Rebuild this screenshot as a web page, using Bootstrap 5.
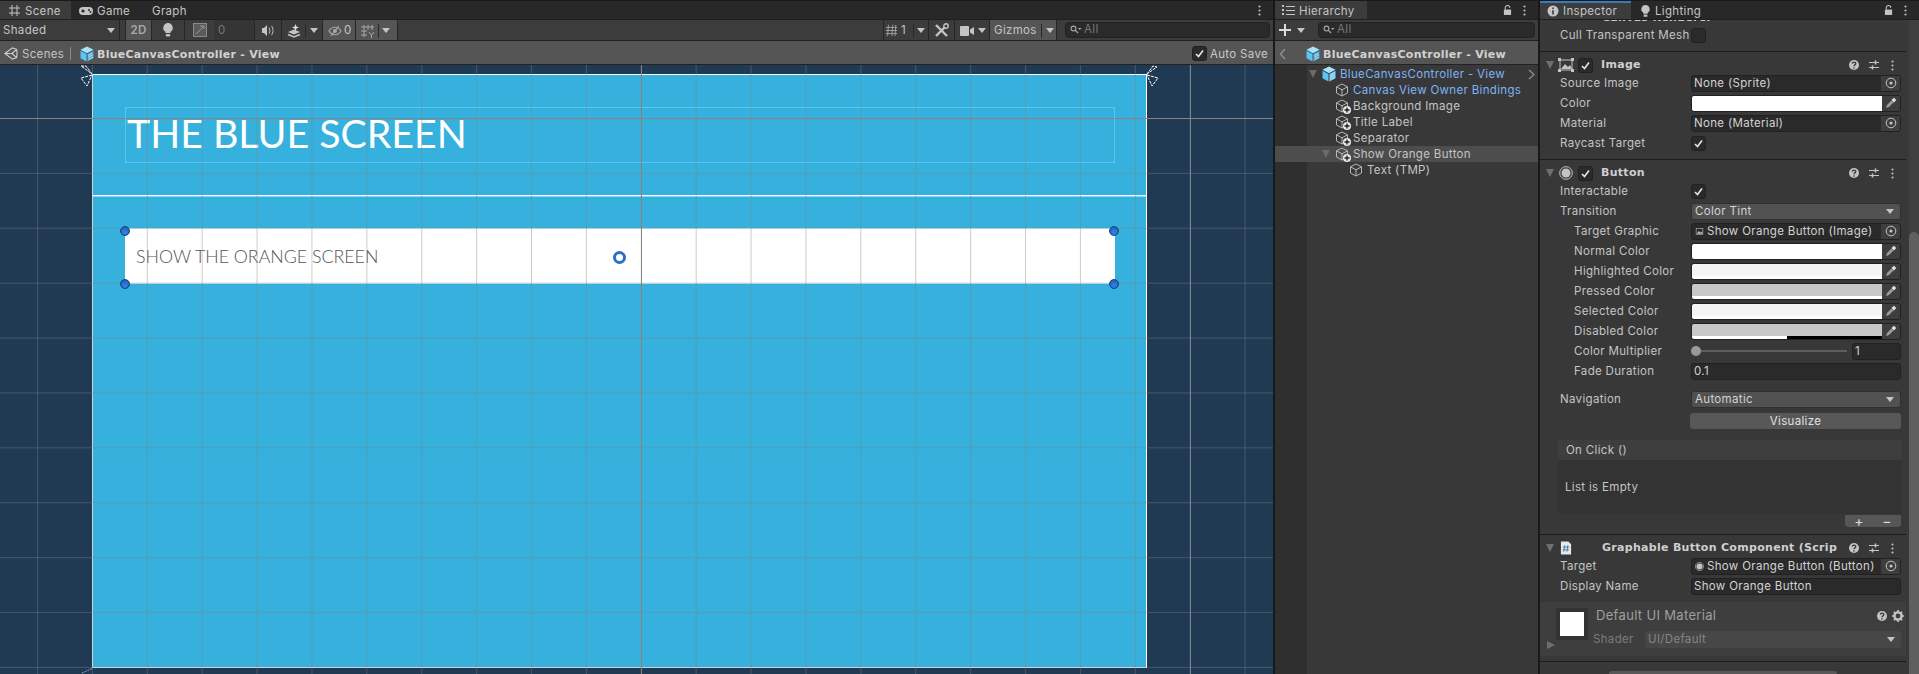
<!DOCTYPE html>
<html lang="en">
<head>
<meta charset="UTF-8">
<meta name="viewport" content="width=device-width, initial-scale=1">
<title>Unity Editor</title>
<link href="https://cdn.jsdelivr.net/npm/bootstrap@5.3.0/dist/css/bootstrap.min.css" rel="stylesheet">
<style>
body { margin:0; width:1919px; height:674px; overflow:hidden; background:#191919; font-family:Inter,"Liberation Sans",sans-serif; font-size:11.5px; letter-spacing:.33px; color:#c4c4c4; line-height:1.2; }
svg { display:block; flex:none; }
.ed-root { height:674px; }
.tabbar { height:20px; background:#282828; border-top:1px solid #1b1b1b; border-bottom:1px solid #1f1f1f; }
.tb-tab { height:18px; display:flex; align-items:center; gap:4px; color:#c4c4c4; padding-top:3px; white-space:nowrap; }
.tb-tab.on { background:#3c3c3c; }
.tb-tab svg { margin-top:-2px; }
.scene-panel { width:1273px; }
.tab-scene { width:71px; padding-left:8px; }
.tab-game { width:81px; padding-left:8px; }
.tab-end { margin-right:12px; margin-left:11px; }
.toolbar { height:21px; background:#3c3c3c; border-bottom:1px solid #1f1f1f; }
.tool { height:20px; display:flex; align-items:center; border-right:1px solid #262626; flex:none; padding:1px 0 0 5px; gap:4px; }
.tool.lit { background:#555; }
.caret { width:0; height:0; border-left:4px solid transparent; border-right:4px solid transparent; border-top:5px solid #c4c4c4; flex:none; }
.tsep { width:1px; height:14px; background:#2a2a2a; flex:none; }
.t-shaded { width:120px; padding-left:3px; justify-content:space-between; padding-right:4px; }
.t-gap { width:6px; padding:0; }
.t-2d { width:26px; padding:1px 0 0; justify-content:center; font-weight:600; color:#a8a8a8; }
.t-bulb { width:33px; justify-content:center; padding:0; }
.t-frame { width:29px; justify-content:center; padding:0; border-right:0; }
.t-num { width:41px; background:#353535; color:#777; border-radius:2px; padding-left:4px; }
.t-audio { width:27px; justify-content:center; padding:0; }
.t-fx { width:41px; padding-left:5px; }
.t-hidden { width:33px; gap:2px; }
.t-grid { width:42px; gap:3px; }
.t-space { flex:1; }
.t-snap { width:46px; background:#3c3c3c; border-left:1px solid #262626; padding-left:1px; gap:3px; }
.t-snap .caret { margin-right:3px; }
.t-tools { width:26px; justify-content:center; padding:0; }
.t-cam { width:35px; }
.t-gizmo { width:67px; padding-left:4px; }
.t-search { width:205px; height:16px; margin:0 3px 0 8px; background:#2a2a2a; border:1px solid #212121; border-radius:4px; display:flex; align-items:center; gap:2px; padding-left:4px; color:#777; flex:none; }
.crumb { height:24px; background:#555; border-bottom:1px solid #222; display:flex; align-items:center; flex:none; padding-top:5px; }
.crumb svg { margin-top:-3px; }
.crumb .chk { margin-top:-3px; }
.crumb .chk svg { margin-top:0; }
.crumb b { font-family:"DejaVu Sans",sans-serif; font-size:11px; letter-spacing:.26px; font-weight:700; color:#d2d2d2; white-space:nowrap; }
.crumb-logo { margin-left:4px; }
.crumb-scenes { color:#c4c4c4; margin:0 8px 0 4px; width:40px; white-space:nowrap; }
.crumb-bar { width:1px; height:13px; background:#8a8a8a; margin:-3px 9px 0 0; }
.crumb-cube { margin-right:3px; }
.crumb-back { margin-left:4px; }
.crumb-prefab { margin-left:19px; margin-right:3px; }
.auto-save { margin-left:auto; display:flex; align-items:center; gap:3px; padding-right:5px; color:#c8c8c8; }
.chk { width:15px; height:15px; background:#2a2a2a; border:1px solid #212121; border-radius:3px; display:flex; align-items:center; justify-content:center; flex:none; }
.canvas-view { position:relative; height:609px; background:#203a54; overflow:hidden; }
.ui-rect { position:absolute; left:92px; top:9px; width:1055px; height:594px; background:#36b0dc; border:1px solid #fff; }
.ui-sep { position:absolute; left:0; right:0; top:120px; height:2px; background:linear-gradient(#fff 50%,#7fd6f5 50%); }
.ui-title { position:absolute; left:32px; top:32px; width:990px; height:56px; border:1px solid #5ac6ee; display:flex; align-items:center; padding:0 0 4px 1px; font-family:Lato,sans-serif; font-weight:400; font-size:39.3px; letter-spacing:0; color:#fff; white-space:nowrap; }
.ui-btn { position:absolute; left:32px; top:153px; width:990px; height:56px; background:#fff; border-top:1px solid #c5f0ff; border-bottom:1px solid #c5f0ff; display:flex; align-items:center; padding:2px 0 0 11px; font-family:Lato,sans-serif; font-weight:300; font-size:17.8px; letter-spacing:0; color:#555; white-space:nowrap; }
.grid-minor { position:absolute; inset:0; pointer-events:none; background-image:linear-gradient(to right,rgba(128,128,128,.4) 1px,transparent 1px),linear-gradient(to bottom,rgba(128,128,128,.4) 1px,transparent 1px); background-size:54.9px 100%,100% 54.9px; background-position:37px 0,0 53px; }
.axis-x,.axis-y,.axis-m { position:absolute; background:#8a8280; }
.axis-x { left:0; right:0; top:53px; height:1px; }
.axis-y { top:0; bottom:0; left:641px; width:1px; }
.axis-m { top:0; bottom:0; left:1190px; width:1px; background:#7e868d; }
.handle { position:absolute; width:10px; height:10px; border-radius:50%; background:radial-gradient(circle at 50% 70%,#2f86ec,#1c56b0); border:1px solid #17406f; }
.h-tl { left:120px; top:161px; } .h-tr { left:1109px; top:161px; } .h-bl { left:120px; top:214px; } .h-br { left:1109px; top:214px; }
.pivot { position:absolute; left:613px; top:186px; width:13px; height:13px; border-radius:50%; border:3px solid #2c6fc4; background:#fff; }
.corner { position:absolute; }
.corner-tl { left:80px; top:0; } .corner-tr { left:1146px; top:0; } .corner-bl { left:80px; top:603px; }
.hier-panel { width:263px; margin-left:2px; background:#383838; }
.tab-hier { width:92px; padding-left:7px; }
.hier-bar { height:21px; background:#3c3c3c; border-bottom:1px solid #1f1f1f; display:flex; align-items:center; padding-left:4px; }
.hier-caret { margin-left:6px; }
.hier-search { width:217px; height:16px; margin-left:13px; background:#2a2a2a; border:1px solid #212121; border-radius:4px; display:flex; align-items:center; gap:2px; padding-left:4px; color:#777; }
.hier-body { flex:1; background:linear-gradient(to right,#2f2f2f 32px,#383838 32px); padding-top:1px; }
.tree-row { height:16px; display:flex; align-items:center; white-space:nowrap; padding-top:2px; }
.tree-row > svg, .tree-go, .tree-tri { margin-top:-2px; }
.tree-row.sel { background:#4d4d4d; }
.tree-blue { color:#7fb2f5; }
.ind-a { padding-left:47px; } .ind-b { padding-left:60px; } .ind-c { padding-left:74px; }
.tree-tri { width:0; height:0; border-left:4px solid transparent; border-right:4px solid transparent; border-top:8px solid #6a6a6a; flex:none; margin-left:-13px; margin-right:5px; }
.tree-ico { margin-right:4px; }
.tree-go { position:relative; width:14px; height:14px; margin-right:4px; flex:none; }
.go-plus { position:absolute; right:-2px; bottom:-1px; }
.ri { margin-left:auto; margin-right:3px; }
.insp-panel { flex:1; margin-left:2px; background:#383838; }
.tab-insp { width:91px; padding-left:7px; position:relative; }
.tab-insp::before { content:""; position:absolute; left:0; right:0; top:0; height:2px; background:#3a79bb; }
.tab-light { padding-left:9px; }
.insp-body { flex:1; overflow:hidden; }
.insp-col { width:366px; margin-right:3px; overflow:hidden; height:654px; }
.insp-scroll { width:10px; background:#3f3f3f; padding-top:212px; }
.insp-thumb { height:100%; background:#5f5f5f; border-radius:5px 5px 0 0; }
.rule { height:1px; background:#1c1c1c; }
.gap6 { height:6px; } .gap7 { height:7px; }
.comp-head { height:21px; display:flex; align-items:center; padding:5px 0 0 6px; }
.comp-tri { width:0; height:0; border-left:4px solid transparent; border-right:4px solid transparent; border-top:8px solid #6f6f6f; margin-right:2px; flex:none; }
.comp-ico { margin:0 4px 0 2px; }
.comp-ico-s { margin:0 4px 0 4px; }
.comp-name { font-family:"DejaVu Sans",sans-serif; font-size:11px; letter-spacing:.3px; font-weight:700; color:#cfcfcf; margin-left:8px; white-space:nowrap; overflow:hidden; }
.graph-name { margin-left:26px; width:235px; flex:none; }
.comp-act { margin-left:auto; display:flex; align-items:center; gap:8px; padding-right:12px; }
.comp-act svg:last-child { margin-left:3px; }
.prow { height:20px; display:flex; align-items:center; padding-left:20px; }
.prow.sub { padding-left:34px; }
.plabel { width:131px; flex:none; white-space:nowrap; padding-top:2px; }
.sub .plabel { width:117px; }
.pfield { width:210px; height:17px; background:#2a2a2a; border:1px solid #212121; border-radius:3px; display:flex; align-items:center; padding:1px 0 0 2px; color:#d2d2d2; white-space:nowrap; flex:none; overflow:hidden; }
.pfield .obj-btn { margin:-1px 0 0 auto; width:19px; height:15px; background:#3e3e3e; display:flex; align-items:center; justify-content:center; flex:none; }
.fld-ico { margin:-1px 3px 0 1px; }
.pdrop { width:210px; height:17px; background:#515151; border:1px solid #303030; border-radius:3px; display:flex; align-items:center; justify-content:space-between; padding:1px 6px 0 3px; color:#d2d2d2; flex:none; }
.pswatch { width:210px; height:17px; border:1px solid #212121; border-radius:3px; display:flex; overflow:hidden; background:#333; flex:none; }
.sw-col { flex:1; display:flex; flex-direction:column; }
.sw-main { flex:1; }
.sw-alpha { height:3px; background:#fff; }
.sw-half { background:linear-gradient(to right,#fff 50%,#000 50%); }
.sw-white { background:#fff; } .sw-light { background:#f5f5f5; } .sw-gray { background:#c8c8c8; }
.sw-pick { width:18px; display:flex; align-items:center; justify-content:center; background:#3e3e3e; }
.pslider { width:210px; display:flex; align-items:center; flex:none; position:relative; }
.slider-track { width:156px; height:2px; background:#5e5e5e; position:relative; margin-right:5px; }
.slider-knob { position:absolute; left:0; top:-4px; width:10px; height:10px; border-radius:50%; background:#999; }
.pfield.mini { width:49px; }
.gap-nav { height:8px; }
.vis-row { height:24px; display:flex; align-items:center; padding-left:150px; }
.vis-btn { width:211px; height:16px; background:#585858; border-radius:3px; display:flex; align-items:center; justify-content:center; color:#e0e0e0; padding-top:1px; }
.evt-box { margin:7px 4px 0 18px; }
.evt-head { height:20px; background:#3e3e3e; display:flex; align-items:center; padding:2px 0 0 8px; }
.evt-list { height:54px; background:#333; display:flex; align-items:center; padding:2px 0 0 7px; }
.evt-foot { width:56px; height:12px; margin:1px 1px 0 auto; background:#565656; border-radius:0 0 3px 3px; display:flex; align-items:center; justify-content:space-around; font-size:14px; color:#ddd; }
.mat-box { height:54px; margin-top:6px; background:#3e3e3e; position:relative; display:flex; padding:6px 2px 0 16px; }
.mat-swatch { width:32px; height:32px; background:#333; padding:4px; flex:none; }
.mat-swatch div { width:24px; height:24px; background:#fff; }
.mat-right { flex:1; padding-left:8px; }
.mat-title { height:16px; display:flex; align-items:center; font-size:13px; color:#9f9f9f; justify-content:space-between; }
.mat-shader { display:flex; align-items:center; margin:7px 3px 0 -3px; color:#7b7b7b; }
.mat-shader > span { width:52px; }
.mat-drop { flex:1; height:17px; background:#474747; border-radius:3px; display:flex; align-items:center; justify-content:space-between; padding:0 6px 0 3px; color:#858585; }
.mat-tri { position:absolute; left:7px; bottom:7px; width:0; height:0; border-top:4px solid transparent; border-bottom:4px solid transparent; border-left:8px solid #6f6f6f; }
.mat-rule { margin-top:5px; }
.add-wrap { height:12px; padding:9px 0 0 69px; }
.add-btn { width:228px; height:3px; background:#585858; border-radius:3px 3px 0 0; }
.clip-head { height:5px; overflow:hidden; position:relative; }
.clip-head span { position:absolute; left:62px; top:-9px; font-family:"DejaVu Sans",sans-serif; font-size:11px; letter-spacing:.3px; font-weight:700; color:#cfcfcf; white-space:nowrap; }
</style>
</head>
<body>
<svg width="0" height="0" class="position-absolute">
  <defs>
    <symbol id="i-cube" viewBox="0 0 14 14"><path d="M7 1 12.5 3.8V10L7 13 1.5 10V3.8ZM1.5 3.8 7 6.8 12.5 3.8M7 6.8V13" fill="none" stroke="#b8b8b8" stroke-width="1"/></symbol>
    <symbol id="i-blue" viewBox="0 0 14 16"><path d="M7 .5 13.5 3.8 7 7.2.5 3.8Z" fill="#a3e4ff"/><path d="M.5 4.8 6.5 8v7.5L.5 12.2Z" fill="#5cc4f2"/><path d="M7.5 8l6-3.2v7.4l-6 3.3Z" fill="#86d5f7"/></symbol>
    <symbol id="i-prefab" viewBox="0 0 14 16"><path d="M7 .5 13.5 3.8 7 7.2.5 3.8Z" fill="#a3e4ff"/><path d="M.5 4.8 6.5 8v7.5L.5 12.2Z" fill="#5cc4f2"/><path d="M7.5 8l6-3.2v7.4l-6 3.3Z" fill="#4aa8d8"/><path d="M8 9.5l4-2.2M8 11.5l5-2.8M8.5 13.5l4.5-2.5" stroke="#c9efff" stroke-width=".8"/></symbol>
    <symbol id="i-plus" viewBox="0 0 8 8"><circle cx="4" cy="4" r="4" fill="#e8e8e8"/><path d="M4 1.5v5M1.5 4h5" stroke="#222" stroke-width="1.4"/></symbol>
    <symbol id="i-target" viewBox="0 0 12 12"><circle cx="6" cy="6" r="4.8" fill="none" stroke="#c4c4c4"/><circle cx="6" cy="6" r="1.6" fill="#c4c4c4"/></symbol>
    <symbol id="i-pick" viewBox="0 0 12 12"><path d="M1 11 2 8 6.5 3.5 8.5 5.5 4 10Z" fill="#9c9c9c"/><path d="M6.5 3 9 .8 11.2 3 9 5.5Z" fill="#e4e4e4"/></symbol>
    <symbol id="i-check" viewBox="0 0 11 11"><path d="M2 6 4.5 8.5 9 2.5" fill="none" stroke="#e6e6e6" stroke-width="1.6"/></symbol>
    <symbol id="i-help" viewBox="0 0 12 12"><circle cx="6" cy="6" r="5" fill="#c4c4c4"/><path d="M4.3 4.6C4.4 2.6 7.8 2.6 7.8 4.6 7.8 5.9 6 5.8 6 7.2" fill="none" stroke="#383838" stroke-width="1.3"/><circle cx="6" cy="9" r=".8" fill="#383838"/></symbol>
    <symbol id="i-sliders" viewBox="0 0 12 12"><path d="M1 3.5h10M1 8.5h10" stroke="#c4c4c4"/><path d="M7.5 1.5v4M4.5 6.5v4" stroke="#c4c4c4" stroke-width="1.6"/></symbol>
    <symbol id="i-kebab" viewBox="0 0 3 11"><circle cx="1.5" cy="1.5" r="1.1" fill="#bbb"/><circle cx="1.5" cy="5.5" r="1.1" fill="#bbb"/><circle cx="1.5" cy="9.5" r="1.1" fill="#bbb"/></symbol>
    <symbol id="i-lock" viewBox="0 0 10 12"><path d="M2.5 5.5V3.5a2.5 2.5 0 0 1 5 0" fill="none" stroke="#c4c4c4" stroke-width="1.2"/><rect x="1" y="5.5" width="8" height="6" fill="#c4c4c4"/></symbol>
    <symbol id="i-search" viewBox="0 0 12 10"><circle cx="3.5" cy="3.5" r="2.4" fill="none" stroke="#a8a8a8" stroke-width="1.1"/><path d="M5.2 5.2 8 8" stroke="#a8a8a8" stroke-width="1.2"/><path d="M8 3h3.5L9.7 5Z" fill="#a8a8a8"/></symbol>
    <symbol id="i-bulb" viewBox="0 0 12 16"><path d="M6 1a4.8 4.8 0 0 0-2.6 8.8V11h5.2V9.8A4.8 4.8 0 0 0 6 1Z" fill="#c4c4c4"/><rect x="3.8" y="12" width="4.4" height="2.6" rx="1" fill="#c4c4c4"/></symbol>
  </defs>
</svg>

<div class="ed-root d-flex">
  <div class="scene-panel d-flex flex-column flex-shrink-0">
    <div class="tabbar d-flex align-items-start">
      <div class="tb-tab on tab-scene">
        <svg width="13" height="13" viewBox="0 0 13 13"><path d="M4 1v11M9 1v11M1 4h11M1 9h11" stroke="#c4c4c4" stroke-width="1"/></svg>Scene
      </div>
      <div class="tb-tab tab-game">
        <svg width="14" height="10" viewBox="0 0 14 10"><rect y="1" width="14" height="8" rx="4" fill="#c4c4c4"/><circle cx="4" cy="5" r="1.6" fill="#282828"/><circle cx="10" cy="4" r="1" fill="#282828"/><circle cx="11.5" cy="6" r="1" fill="#282828"/></svg>Game
      </div>
      <div class="tb-tab">Graph</div>
      <svg class="ms-auto tab-end align-self-center" width="3" height="11"><use href="#i-kebab"/></svg>
    </div>
    <div class="toolbar d-flex">
      <div class="tool t-shaded">Shaded<span class="caret"></span></div>
      <div class="tool t-gap"></div>
      <div class="tool t-2d lit">2D</div>
      <div class="tool t-bulb"><svg width="12" height="16"><use href="#i-bulb"/></svg></div>
      <div class="tool t-frame"><svg width="14" height="14" viewBox="0 0 14 14"><rect x=".5" y=".5" width="13" height="13" fill="#5a5a5a" stroke="#8a8a8a"/><path d="M3 11 11 3M7 3h4v3" stroke="#9a9a9a" fill="none"/></svg></div>
      <div class="tool t-num">0</div>
      <div class="tool t-audio"><svg width="14" height="13" viewBox="0 0 14 13"><path d="M1 4h2l3-3v11L3 9H1Z" fill="#c4c4c4"/><path d="M8 3.5c1.2 1.6 1.2 4.4 0 6M10.5 2c2 2.4 2 6.6 0 9" fill="none" stroke="#c4c4c4"/></svg></div>
      <div class="tool t-fx"><svg width="14" height="14" viewBox="0 0 14 14"><path d="M1 8 7 5.5 13 8 7 10.5Z" fill="#c4c4c4"/><path d="M1 10.5 7 13 13 10.5" fill="none" stroke="#c4c4c4" stroke-width="1.4"/><path d="M8.5 0l1 2.5L12 3.5 9.5 4.5 8.5 7 7.5 4.5 5 3.5l2.5-1Z" fill="#dcdcdc"/></svg><span class="tsep"></span><span class="caret"></span></div>
      <div class="tool t-hidden lit"><svg width="14" height="12" viewBox="0 0 14 12"><path d="M1 6c3-5 9-5 12 0-3 5-9 5-12 0Z" fill="none" stroke="#a8a8a8" stroke-width="1.2"/><circle cx="7" cy="6" r="2" fill="#a8a8a8"/><path d="M3 11 11 1" stroke="#a8a8a8" stroke-width="1.2"/></svg>0</div>
      <div class="tool t-grid lit"><svg width="14" height="14" viewBox="0 0 14 14"><path d="M3 1v12M7 1v5M11 1v5M0 3h13M0 7h6M0 11h6M8 8l2.5 3 2.5-3M10.5 11v3" fill="none" stroke="#a8a8a8"/></svg><span class="tsep"></span><span class="caret"></span></div>
      <div class="t-space"></div>
      <div class="tool t-snap"><svg width="13" height="13" viewBox="0 0 15 15"><path d="M4 1 3 14M9 1 8 14M12.5 1l-1 13M1 4h13M1 7.5h13M1 11h13" fill="none" stroke="#a8a8a8"/></svg>1<span class="tsep ms-auto"></span><span class="caret"></span></div>
      <div class="tool t-tools"><svg width="15" height="15" viewBox="0 0 15 15"><path d="M2 2 13 13" stroke="#c4c4c4" stroke-width="2.4"/><path d="M13 2 2 13" stroke="#c4c4c4" stroke-width="2.4"/><circle cx="12" cy="3" r="2.2" fill="#3c3c3c" stroke="#c4c4c4" stroke-width="1.4"/></svg></div>
      <div class="tool t-cam"><svg width="14" height="10" viewBox="0 0 14 10"><rect width="9" height="10" rx="1" fill="#c4c4c4"/><path d="M10 3.5 14 1v8L10 6.5Z" fill="#c4c4c4"/></svg><span class="caret"></span></div>
      <div class="tool t-gizmo lit">Gizmos<span class="tsep ms-auto"></span><span class="caret me-1"></span></div>
      <div class="t-search align-self-center"><svg width="12" height="10"><use href="#i-search"/></svg>All</div>
    </div>
    <div class="crumb">
      <svg class="crumb-logo" width="14" height="15" viewBox="0 0 15 15"><path d="M1 7.5 9 1.5 13.5 3 14 7.5 13.5 12 9 13.5ZM1 7.5H8.5M8.5 7.5 13.5 3M8.5 7.5 13.5 12" fill="none" stroke="#cfcfcf" stroke-width="1.2"/></svg>
      <span class="crumb-scenes">Scenes</span><span class="crumb-bar"></span>
      <svg class="crumb-cube" width="14" height="16"><use href="#i-prefab"/></svg><b>BlueCanvasController - View</b>
      <div class="auto-save"><span class="chk"><svg width="11" height="11"><use href="#i-check"/></svg></span>Auto Save</div>
    </div>
    <div class="canvas-view">
      <div class="ui-rect">
        <div class="ui-title">THE BLUE SCREEN</div>
        <div class="ui-sep"></div>
        <div class="ui-btn">SHOW THE ORANGE SCREEN</div>
      </div>
      <div class="grid-minor"></div>
      <div class="axis-x"></div><div class="axis-y"></div><div class="axis-m"></div>
      <svg class="corner corner-tl" width="13" height="22" viewBox="0 0 13 22"><path d="M12 9 6 1 1 1 4 3ZM12 10 1 13 7 21Z" fill="none" stroke="#fff" stroke-dasharray="3 1"/></svg>
      <svg class="corner corner-tr" width="13" height="22" viewBox="0 0 13 22"><path d="M1 9 7 1 11 2 8 4ZM1 10 12 13 6 21Z" fill="none" stroke="#fff" stroke-dasharray="3 1"/></svg>
      <svg class="corner corner-bl" width="13" height="6" viewBox="0 0 13 6"><path d="M12 .5 1 5.5" stroke="#8fa3b5" stroke-dasharray="2 1"/></svg>
      <span class="handle h-tl"></span><span class="handle h-tr"></span><span class="handle h-bl"></span><span class="handle h-br"></span>
      <span class="pivot"></span>
    </div>
  </div>

  <div class="hier-panel d-flex flex-column flex-shrink-0">
    <div class="tabbar d-flex align-items-start">
      <div class="tb-tab on tab-hier"><svg width="13" height="11" viewBox="0 0 13 11"><path d="M4 1.5h9M4 5.5h9M4 9.5h9" stroke="#c4c4c4"/><path d="M0 0h2v2H0ZM0 4h2v2H0ZM0 8h2v2H0Z" fill="#c4c4c4"/></svg>Hierarchy</div>
      <svg class="ms-auto align-self-center" width="9" height="12"><use href="#i-lock"/></svg>
      <svg class="tab-end align-self-center" width="3" height="11"><use href="#i-kebab"/></svg>
    </div>
    <div class="hier-bar">
      <svg width="12" height="12" viewBox="0 0 12 12"><path d="M6 0v12M0 6h12" stroke="#dcdcdc" stroke-width="2"/></svg>
      <span class="caret hier-caret"></span>
      <div class="hier-search"><svg width="12" height="10"><use href="#i-search"/></svg>All</div>
    </div>
    <div class="crumb">
      <svg class="crumb-back" width="8" height="12" viewBox="0 0 8 12"><path d="M6 1 1.5 6 6 11" fill="none" stroke="#8c8c8c" stroke-width="1.6"/></svg>
      <svg class="crumb-prefab" width="14" height="16"><use href="#i-prefab"/></svg><b>BlueCanvasController - View</b>
    </div>
    <div class="hier-body">
      <div class="tree-row ind-a tree-blue"><span class="tree-tri"></span><svg width="14" height="16" class="me-1"><use href="#i-blue"/></svg>BlueCanvasController - View<svg class="ri" width="7" height="11" viewBox="0 0 7 11"><path d="M1 1 6 5.5 1 10" fill="none" stroke="#8c8c8c" stroke-width="1.4"/></svg></div>
      <div class="tree-row ind-b tree-blue"><svg width="14" height="14" class="tree-ico"><use href="#i-cube"/></svg>Canvas View Owner Bindings</div>
      <div class="tree-row ind-b"><span class="tree-go"><svg width="14" height="14"><use href="#i-cube"/></svg><svg class="go-plus" width="8" height="8"><use href="#i-plus"/></svg></span>Background Image</div>
      <div class="tree-row ind-b"><span class="tree-go"><svg width="14" height="14"><use href="#i-cube"/></svg><svg class="go-plus" width="8" height="8"><use href="#i-plus"/></svg></span>Title Label</div>
      <div class="tree-row ind-b"><span class="tree-go"><svg width="14" height="14"><use href="#i-cube"/></svg><svg class="go-plus" width="8" height="8"><use href="#i-plus"/></svg></span>Separator</div>
      <div class="tree-row ind-b sel"><span class="tree-tri"></span><span class="tree-go"><svg width="14" height="14"><use href="#i-cube"/></svg><svg class="go-plus" width="8" height="8"><use href="#i-plus"/></svg></span>Show Orange Button</div>
      <div class="tree-row ind-c"><svg width="14" height="14" class="tree-ico"><use href="#i-cube"/></svg>Text (TMP)</div>
    </div>
  </div>

  <div class="insp-panel d-flex flex-column">
    <div class="tabbar d-flex align-items-start">
      <div class="tb-tab on tab-insp"><svg width="12" height="12" viewBox="0 0 12 12"><circle cx="6" cy="6" r="5.5" fill="#c4c4c4"/><path d="M6 2.5v1.5M6 5.2V9.5" stroke="#3c3c3c" stroke-width="1.6"/></svg>Inspector</div>
      <div class="tb-tab tab-light"><svg width="11" height="14"><use href="#i-bulb"/></svg>Lighting</div>
      <svg class="ms-auto align-self-center" width="9" height="12"><use href="#i-lock"/></svg>
      <svg class="tab-end align-self-center" width="3" height="11"><use href="#i-kebab"/></svg>
    </div>
    <div class="insp-body d-flex">
      <div class="insp-col">
        <div class="clip-head"><span>Canvas Renderer</span></div>
        <div class="prow"><span class="plabel">Cull Transparent Mesh</span><span class="chk"></span></div>
        <div class="gap6"></div>
        <div class="rule"></div>

        <div class="comp-head"><span class="comp-tri"></span>
          <svg class="comp-ico" width="16" height="14" viewBox="0 0 16 14"><rect x="2" y="2" width="12" height="10" fill="none" stroke="#c4c4c4"/><path d="M3 11 7 6l3 3 2-2 2 4Z" fill="#c4c4c4"/><path d="M0 0h3v3H0ZM13 0h3v3h-3ZM0 11h3v3H0ZM13 11h3v3h-3Z" fill="#c4c4c4"/></svg>
          <span class="chk"><svg width="11" height="11"><use href="#i-check"/></svg></span><span class="comp-name">Image</span>
          <div class="comp-act"><svg width="12" height="12"><use href="#i-help"/></svg><svg width="12" height="12"><use href="#i-sliders"/></svg><svg width="3" height="11"><use href="#i-kebab"/></svg></div>
        </div>
        <div class="prow"><span class="plabel">Source Image</span><div class="pfield">None (Sprite)<span class="obj-btn"><svg width="12" height="12"><use href="#i-target"/></svg></span></div></div>
        <div class="prow"><span class="plabel">Color</span><div class="pswatch"><div class="sw-col"><div class="sw-main sw-white"></div></div><div class="sw-pick"><svg width="12" height="12"><use href="#i-pick"/></svg></div></div></div>
        <div class="prow"><span class="plabel">Material</span><div class="pfield">None (Material)<span class="obj-btn"><svg width="12" height="12"><use href="#i-target"/></svg></span></div></div>
        <div class="prow"><span class="plabel">Raycast Target</span><span class="chk"><svg width="11" height="11"><use href="#i-check"/></svg></span></div>
        <div class="gap6"></div>
        <div class="rule"></div>

        <div class="comp-head"><span class="comp-tri"></span>
          <svg class="comp-ico" width="16" height="14" viewBox="0 0 16 14"><circle cx="8" cy="7" r="6.3" fill="none" stroke="#c4c4c4"/><circle cx="8" cy="7" r="4.5" fill="#c4c4c4"/></svg>
          <span class="chk"><svg width="11" height="11"><use href="#i-check"/></svg></span><span class="comp-name">Button</span>
          <div class="comp-act"><svg width="12" height="12"><use href="#i-help"/></svg><svg width="12" height="12"><use href="#i-sliders"/></svg><svg width="3" height="11"><use href="#i-kebab"/></svg></div>
        </div>
        <div class="prow"><span class="plabel">Interactable</span><span class="chk"><svg width="11" height="11"><use href="#i-check"/></svg></span></div>
        <div class="prow"><span class="plabel">Transition</span><div class="pdrop">Color Tint<span class="caret"></span></div></div>
        <div class="prow sub"><span class="plabel">Target Graphic</span><div class="pfield"><svg class="fld-ico" width="9" height="9" viewBox="0 0 16 14"><rect x="2" y="2" width="12" height="10" fill="none" stroke="#c4c4c4"/><path d="M3 11 7 6l3 3 2-2 2 4Z" fill="#c4c4c4"/></svg>Show Orange Button (Image)<span class="obj-btn"><svg width="12" height="12"><use href="#i-target"/></svg></span></div></div>
        <div class="prow sub"><span class="plabel">Normal Color</span><div class="pswatch"><div class="sw-col"><div class="sw-main sw-white"></div></div><div class="sw-pick"><svg width="12" height="12"><use href="#i-pick"/></svg></div></div></div>
        <div class="prow sub"><span class="plabel">Highlighted Color</span><div class="pswatch"><div class="sw-col"><div class="sw-main sw-light"></div><div class="sw-alpha"></div></div><div class="sw-pick"><svg width="12" height="12"><use href="#i-pick"/></svg></div></div></div>
        <div class="prow sub"><span class="plabel">Pressed Color</span><div class="pswatch"><div class="sw-col"><div class="sw-main sw-gray"></div><div class="sw-alpha"></div></div><div class="sw-pick"><svg width="12" height="12"><use href="#i-pick"/></svg></div></div></div>
        <div class="prow sub"><span class="plabel">Selected Color</span><div class="pswatch"><div class="sw-col"><div class="sw-main sw-light"></div><div class="sw-alpha"></div></div><div class="sw-pick"><svg width="12" height="12"><use href="#i-pick"/></svg></div></div></div>
        <div class="prow sub"><span class="plabel">Disabled Color</span><div class="pswatch"><div class="sw-col"><div class="sw-main sw-gray"></div><div class="sw-alpha sw-half"></div></div><div class="sw-pick"><svg width="12" height="12"><use href="#i-pick"/></svg></div></div></div>
        <div class="prow sub"><span class="plabel">Color Multiplier</span><div class="pslider"><div class="slider-track"><span class="slider-knob"></span></div><div class="pfield mini">1</div></div></div>
        <div class="prow sub"><span class="plabel">Fade Duration</span><div class="pfield">0.1</div></div>
        <div class="gap-nav"></div>
        <div class="prow"><span class="plabel">Navigation</span><div class="pdrop">Automatic<span class="caret"></span></div></div>
        <div class="vis-row"><div class="vis-btn">Visualize</div></div>
        <div class="evt-box">
          <div class="evt-head">On Click ()</div>
          <div class="evt-list">List is Empty</div>
          <div class="evt-foot"><span>+</span><span>−</span></div>
        </div>
        <div class="gap7"></div>
        <div class="rule"></div>

        <div class="comp-head"><span class="comp-tri"></span>
          <svg class="comp-ico-s" width="12" height="14" viewBox="0 0 13 14"><path d="M1 0h8l3 3v11H1Z" fill="#e8e8e8"/><path d="M5 4 4 11M8.5 4l-1 7M3 6h7M2.8 9h7" stroke="#3c7ab0" stroke-width="1"/></svg>
          <span class="comp-name graph-name">Graphable Button Component (Script)</span>
          <div class="comp-act"><svg width="12" height="12"><use href="#i-help"/></svg><svg width="12" height="12"><use href="#i-sliders"/></svg><svg width="3" height="11"><use href="#i-kebab"/></svg></div>
        </div>
        <div class="prow"><span class="plabel">Target</span><div class="pfield"><svg class="fld-ico" width="9" height="9" viewBox="0 0 12 12"><circle cx="6" cy="6" r="5.5" fill="none" stroke="#aaa"/><circle cx="6" cy="6" r="4" fill="#c4c4c4"/></svg>Show Orange Button (Button)<span class="obj-btn"><svg width="12" height="12"><use href="#i-target"/></svg></span></div></div>
        <div class="prow"><span class="plabel">Display Name</span><div class="pfield">Show Orange Button</div></div>
        <div class="mat-box">
          <div class="mat-swatch"><div></div></div>
          <span class="mat-tri"></span>
          <div class="mat-right">
            <div class="mat-title">Default UI Material<span class="d-flex gap-1"><svg width="12" height="12"><use href="#i-help"/></svg><svg width="12" height="12" viewBox="0 0 12 12"><circle cx="6" cy="6" r="3.6" fill="none" stroke="#c4c4c4" stroke-width="2.4"/><path d="M6 0v2M6 10v2M0 6h2M10 6h2M1.8 1.8l1.4 1.4M8.8 8.8l1.4 1.4M1.8 10.2l1.4-1.4M8.8 3.2l1.4-1.4" stroke="#c4c4c4" stroke-width="1.6"/></svg></span></div>
            <div class="mat-shader"><span>Shader</span><div class="mat-drop">UI/Default<span class="caret"></span></div></div>
          </div>
        </div>
        <div class="rule mat-rule"></div>
        <div class="add-wrap"><div class="add-btn"></div></div>
      </div>
      <div class="insp-scroll"><div class="insp-thumb"></div></div>
    </div>
  </div>
</div>
<script src="https://cdn.jsdelivr.net/npm/bootstrap@5.3.0/dist/js/bootstrap.bundle.min.js"></script>
</body>
</html>
